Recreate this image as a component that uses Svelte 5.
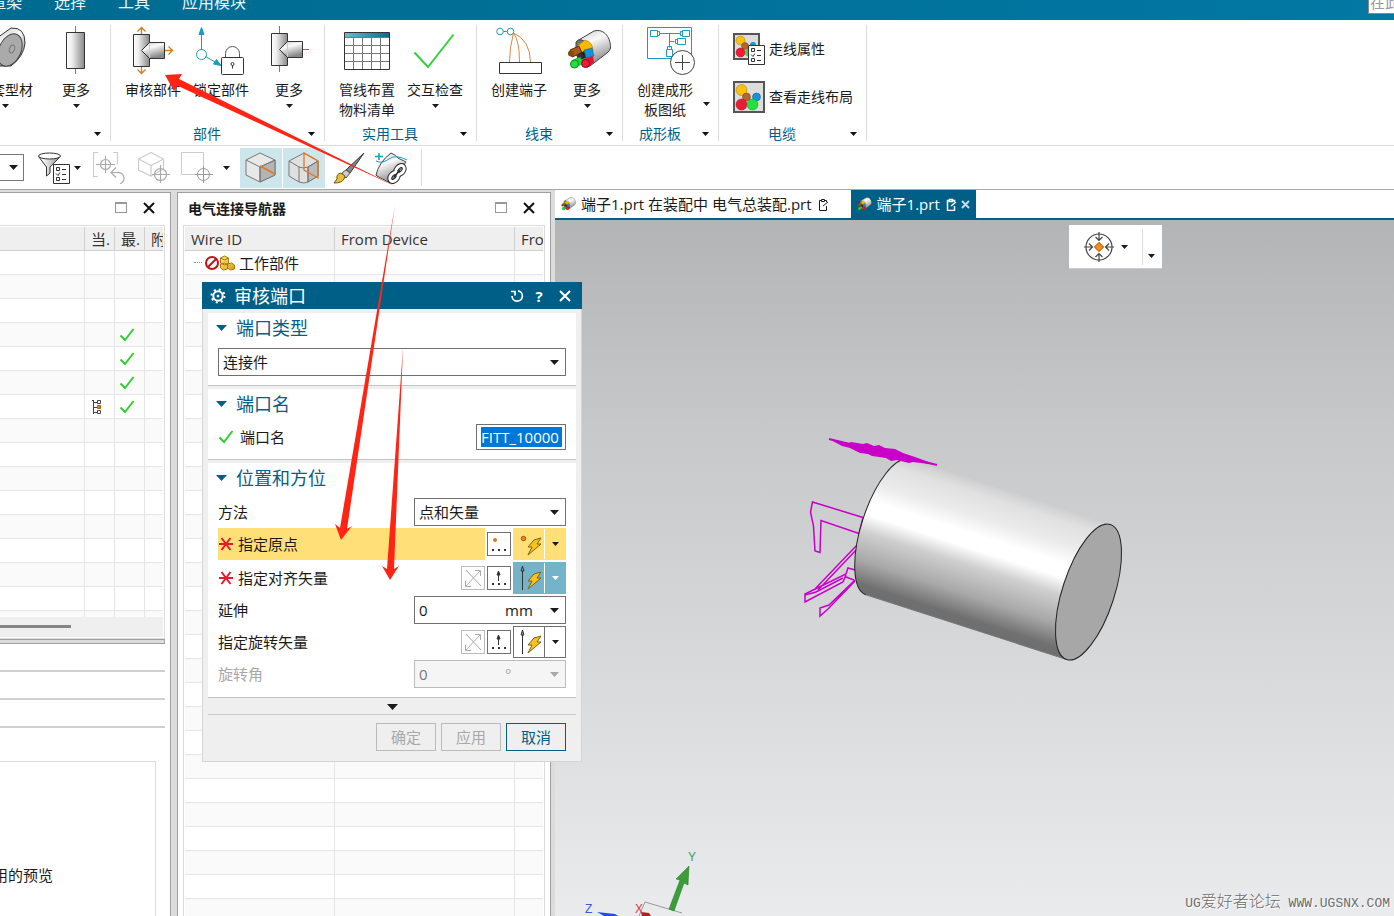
<script>
    let menus = ["渲染", "选择", "工具", "应用模块"];

    let leftRows = Array.from({ length: 16 }, (_, i) => ({
        checked: i >= 3 && i <= 6,
        tree: i === 6,
    }));
    let navRows = Array.from({ length: 40 }, (_, i) => (i === 0 ? "工作部件" : ""));

    let portType = $state("连接件");
    let portName = $state("FITT_10000");
    let method = $state("点和矢量");
    let extension = $state("0");
    let angle = $state("0");
</script>

{#snippet caret(size)}
    {#if size === "big"}
        <svg class="caret" width="11" height="6" viewBox="0 0 11 6"><path d="M0 0h11L5.5 6z" fill="currentColor" /></svg>
    {:else if size === "mid"}
        <svg class="caret" width="9" height="5" viewBox="0 0 9 5"><path d="M0 0h9L4.5 5z" fill="currentColor" /></svg>
    {:else}
        <svg class="caret" width="7" height="4" viewBox="0 0 7 4"><path d="M0 0h7L3.5 4z" fill="currentColor" /></svg>
    {/if}
{/snippet}

{#snippet tee()}
    <path d="M4.5 8.5h16v32h-16z" fill="url(#steel)" stroke="#333" />
    <path d="M20.5 16.5h15v16h-15l-8-8z" fill="url(#steelV)" stroke="#333" />
    <path d="M20.5 17v15" stroke="#ccc" />
{/snippet}

{#snippet cable()}
    <path d="M14 15L31 5C42 2 48 13 47.5 22Q47 25 44 27L27 40Q18 40 14 28z" fill="url(#steelV)" stroke="#444" />
    <path d="M13 16Q18 11 23 17Q31 27 27 40Q18 40 13 28z" fill="#777" stroke="#444" />
    <path d="M14 20l8-6q8 2 8 11l-9 4z" fill="#fbb902" stroke="#8a6a00" stroke-width="0.5" />
    <path d="M7 24l9-4 3 7-10 4z" fill="#a85a1a" stroke="#5e2f08" />
    <circle cx="8" cy="27.5" r="3" fill="#8a4512" />
    <path d="M15 28l6-3 3 6-7 3z" fill="#222" /><circle cx="17" cy="30.500" r="3" fill="#333" />
    <path d="M21 24l8-2 2 8-8 2z" fill="#1493d8" stroke="#075a8a" stroke-width="0.5" />
    <path d="M10 34l7-3 4 6-8 4z" fill="#1ed63b" stroke="#0c8a20" stroke-width="0.5" /><circle cx="11.5" cy="38" r="4" fill="#22e040" stroke="#0c8a20" />
    <path d="M21 33l9-3 1 6-7 6z" fill="#e8122c" /><circle cx="22.5" cy="37.500" r="4" fill="#f01a34" stroke="#8a0c1a" />
{/snippet}

{#snippet cross(color = "#111")}
    <svg width="12" height="12" viewBox="0 0 12 12"><path d="M1 1l10 10M11 1L1 11" stroke={color} stroke-width="2" /></svg>
{/snippet}

{#snippet check()}
    <svg width="16" height="16" viewBox="0 0 16 16"><path d="M1.5 8.5L6 13L14.5 2" fill="none" stroke="#3c3" stroke-width="2" /></svg>
{/snippet}

{#snippet star()}
    <svg width="16" height="16" viewBox="0 0 16 16"><path d="M1 8h14M3.5 2l9 12M12.5 2l-9 12" stroke="#e8192c" stroke-width="2" /></svg>
{/snippet}

{#snippet paper(x, y)}
    <g transform="translate({x} {y})">
        <path d="M.5.5h16v19H.5z" fill="#fff" stroke="#333" />
        <path d="M3.500 3.500h3v3h-3zM3.500 13.500h3v3h-3zM9 5.500h4M9 10.500h4M9 15.500h4" fill="none" stroke="#333" />
        <path d="M3 9.500l2 2 2-3" fill="none" stroke="#333" />
    </g>
{/snippet}

{#snippet toolIcon(name)}
    <svg class="tool-icon" width="48" height="48" viewBox="0 0 48 48" fill="none">
        {#if name === "roll"}
            <path d="M30 2Q44 1 44 17Q43 30 30 40H16V12z" fill="url(#steelV)" stroke="#333" />
            <ellipse cx="29" cy="24" rx="11" ry="17" transform="rotate(24 29 24)" fill="#aaa" stroke="#444" />
            <ellipse cx="31" cy="23" rx="2.5" ry="4" transform="rotate(20 31 23)" stroke="#777" />
        {:else if name === "pipe"}
            <path d="M23.5 0v6M23.5 43v5" stroke="#1a9cc0" />
            <path d="M14.5 6.500h18v36h-18z" fill="url(#steel)" stroke="#333" />
        {:else if name === "audit"}
            {@render tee()}
            <path d="M12.5 8V2M8.5 5.500l4-4 4 4M12.5 41v6M8.5 43.500l4 4 4-4M36 24.500h7M39.5 20.500l4 4-4 4" stroke="#e0791c" stroke-width="1.3" />
        {:else if name === "lock"}
            <path d="M4.5 24V6M8.5 30.500L19 36.500" stroke="#1a9cc0" />
            <path d="M4.5 1.500L7 8.500H2zM24 39.500l-7.500-1.500 3-4.500z" fill="#1a9cc0" stroke="#1a9cc0" />
            <circle cx="4.5" cy="28.5" r="5" stroke="#1a9cc0" />
            <path d="M28.5 31.500v-4a7 7 0 0 1 14 0v4" stroke="#555" />
            <rect x="24.5" y="31.5" width="22" height="17" rx="1" fill="#fff" stroke="#333" />
            <circle cx="35.5" cy="38" r="1.5" stroke="#333" /><path d="M35.5 39.500v3" stroke="#333" />
        {:else if name === "tee"}
            <g transform="translate(2 -1)">
                <path d="M12.5 8V1M12.5 41v6M36 24.500h6" stroke="#1a9cc0" />
                {@render tee()}
            </g>
        {:else if name === "table"}
            <path d="M1.5 6.500h45v37h-45z" fill="#fff" />
            <path d="M1.5 6.500h45v5h-45z" fill="url(#teal)" />
            <path d="M10.5 12v31M19.5 12v31M28.5 12v31M37.5 12v31M2 19.500h44M2 27.500h44M2 35.500h44M2 11.500h44" stroke="#777" />
            <path d="M1.5 6.500h45v37h-45z" stroke="#333" />
        {:else if name === "check"}
            <path d="M3.5 26.500L17 41L42.5 8.500" stroke="#33d23c" stroke-width="2" />
        {:else if name === "terminal"}
            <circle cx="5" cy="5.500" r="3.300" stroke="#1a9cc0" /><circle cx="15.5" cy="5.500" r="3.300" stroke="#1a9cc0" /><path d="M8.5 5.500h4" stroke="#1a9cc0" />
            <path d="M18.5 7Q14.5 22 14.5 36M18.5 7Q24.5 15 24.5 36M18.5 7Q35 14 35.5 36" stroke="#d98b3a" />
            <path d="M4.5 36.500h42v11h-42z" fill="#fff" stroke="#333" />
        {:else if name === "cable"}
            {@render cable()}
        {:else if name === "board"}
            <path d="M6.5 1.500h44v31h-44zM19 7.500h20M28.5 7.500v14M28.5 15.500h5" stroke="#1a9cc0" />
            <path d="M9.5 4.500h7v6h-7zM16.5 5.500h2v4h-2zM41.5 4.500h7v6h-7zM39.5 5.500h2v4h-2zM36.5 12.500h8v6h-8zM34.5 13.500h2v4h-2zM25.5 23.500h6v7h-6zM26.5 20.500h4v3h-4z" stroke="#1a9cc0" />
            <circle cx="41.5" cy="36.5" r="12" fill="#fff" stroke="#444" />
            <path d="M41.5 29v15M34 36.500h15" stroke="#444" />
        {/if}
    </svg>
{/snippet}

{#snippet tool(icon, lines, arrow)}
    <button class="tool">
        {@render toolIcon(icon)}
        <span class="tool-label">{#each lines as line}<span>{line}</span>{/each}</span>
        {#if arrow}{@render caret()}{/if}
    </button>
{/snippet}

{#snippet groupFoot(name)}
    <div class="group-foot">
        <span>{name}</span>
        <button aria-label="更多选项">{@render caret()}</button>
    </div>
{/snippet}

{#snippet bolt()}
    <path d="M23 10l7-2-4 6h4L17 25l4-8h-4z" transform="translate(-3 1)" fill="#fbc21a" stroke="#7d6218" />
{/snippet}

{#snippet pointButtons(kind, look)}
    {#if kind === "vector"}
        <button type="button" class="mini dim" aria-label="反向" disabled>
            <svg width="22" height="22" viewBox="0 0 22 22" fill="none" stroke="#aaa"><path d="M4 3l15 16M4 19L18 4M13 3.500h5.500V9M3.500 14v5.500H9" /></svg>
        </button>
    {/if}
    <button type="button" class="mini" aria-label="对话框">
        <svg width="22" height="22" viewBox="0 0 22 22">
            {#if kind === "point"}
                <circle cx="7" cy="7" r="2" fill="#e0791c" />
            {:else}
                <path d="M10.5 14V5M9 8l1.500-4L12 8z" fill="#333" stroke="#333" />
            {/if}
            <path d="M4 16h2v2H4zM10 16h2v2h-2zM16 16h2v2h-2z" fill="#333" />
        </svg>
    </button>
    <span class="split {look}">
        <button type="button" aria-label="自动判断">
            <svg width="30" height="30" viewBox="0 0 30 30" fill="none">
                {#if kind === "point"}
                    <circle cx="9.5" cy="9.500" r="2.300" fill="#e8861c" stroke="#a85a10" />
                {:else}
                    <path d="M8.5 27V8M7 8l1.500-5L10 8z" stroke="#333" fill="#999" />
                {/if}
                {@render bolt()}
            </svg>
        </button>
        <button type="button" class="drop" aria-label="选项">{@render caret()}</button>
    </span>
{/snippet}

<svg class="defs" width="0" height="0" aria-hidden="true">
    <defs>
        <linearGradient id="steel"><stop offset="0" stop-color="#fff" /><stop offset="0.3" stop-color="#eee" /><stop offset="1" stop-color="#888" /></linearGradient>
        <linearGradient id="steelV" x2="0.4" y2="1"><stop offset="0" stop-color="#c8c8c8" /><stop offset="0.4" stop-color="#fafafa" /><stop offset="1" stop-color="#888" /></linearGradient>
        <linearGradient id="teal"><stop offset="0" stop-color="#6cbdd4" /><stop offset="1" stop-color="#006d92" /></linearGradient>
        <linearGradient id="body" x2="0" y2="1">
            <stop offset="0" stop-color="#cfcfcf" /><stop offset="0.08" stop-color="#e0e0e0" /><stop offset="0.24" stop-color="#ececec" />
            <stop offset="0.36" stop-color="#fff" /><stop offset="0.46" stop-color="#fff" /><stop offset="0.58" stop-color="#cfcfcf" />
            <stop offset="0.78" stop-color="#a8a8a8" /><stop offset="0.94" stop-color="#707070" /><stop offset="1" stop-color="#6e6e6e" />
        </linearGradient>
        <linearGradient id="gold" x2="1" y2="1"><stop offset="0" stop-color="#ffe878" /><stop offset="1" stop-color="#d89f18" /></linearGradient>
    </defs>
</svg>

<div class="app">
    <header class="menubar">
        <nav>
            {#each menus as menu}
                <button>{menu}</button>
            {/each}
        </nav>
        <input class="search" type="text" placeholder="在此" aria-label="搜索" />
    </header>

    <section class="ribbon">
        <div class="group first">
            <div class="tools">
                {@render tool("roll", ["套型材"], true)}
                {@render tool("pipe", ["更多"], true)}
            </div>
            {@render groupFoot("")}
        </div>
        <div class="group">
            <div class="tools">
                {@render tool("audit", ["审核部件"], false)}
                {@render tool("lock", ["锁定部件"], false)}
                {@render tool("tee", ["更多"], true)}
            </div>
            {@render groupFoot("部件")}
        </div>
        <div class="group utils">
            <div class="tools">
                {@render tool("table", ["管线布置", "物料清单"], false)}
                {@render tool("check", ["交互检查"], true)}
            </div>
            {@render groupFoot("实用工具")}
        </div>
        <div class="group">
            <div class="tools">
                {@render tool("terminal", ["创建端子"], false)}
                {@render tool("cable", ["更多"], true)}
            </div>
            {@render groupFoot("线束")}
        </div>
        <div class="group board">
            <div class="tools">
                {@render tool("board", ["创建成形", "板图纸"], false)}
                <button class="side-caret" aria-label="展开">{@render caret()}</button>
            </div>
            {@render groupFoot("成形板")}
        </div>
        <div class="group wires">
            <div class="tools list">
                <button class="line-tool">
                    <svg width="32" height="32" viewBox="0 0 32 32">
                        <path d="M1 1h25v25H1z" fill="#ddd" stroke="#555" stroke-width="2" />
                        <circle cx="7.5" cy="7.500" r="4.500" fill="#fbc010" stroke="#a07800" stroke-width="0.5" /><circle cx="12" cy="13" r="3.500" fill="#b5672a" stroke="#7a4010" stroke-width="0.5" />
                        <circle cx="20" cy="12" r="3" fill="#1493d8" /><circle cx="7.5" cy="19.500" r="4.500" fill="#f01a34" stroke="#a00c1a" stroke-width="0.5" /><circle cx="16" cy="19.5" r="4" fill="#22e040" />
                        {@render paper(15, 12)}
                    </svg>
                    走线属性
                </button>
                <button class="line-tool">
                    <svg width="32" height="32" viewBox="0 0 32 32">
                        <path d="M1 1h30v30H1z" fill="#ddd" stroke="#555" stroke-width="2" />
                        <circle cx="8.5" cy="9" r="5.500" fill="#fbc010" stroke="#a07800" stroke-width="0.5" /><circle cx="13.5" cy="16" r="4" fill="#b5672a" stroke="#7a4010" stroke-width="0.5" />
                        <circle cx="23.5" cy="16" r="4" fill="#1493d8" stroke="#0a5c8c" stroke-width="0.5" /><circle cx="8.5" cy="23.500" r="5.500" fill="#f01a34" stroke="#a00c1a" stroke-width="0.5" /><circle cx="19.5" cy="23.500" r="5.500" fill="#22e040" stroke="#0c9a22" stroke-width="0.5" />
                    </svg>
                    查看走线布局
                </button>
            </div>
            {@render groupFoot("电缆")}
        </div>
    </section>

    <section class="toolbar">
        <button class="stub" aria-label="选择范围">{@render caret("mid")}</button>
        <button class="filter" aria-label="过滤器">
            <svg width="32" height="32" viewBox="0 0 32 32" fill="none" stroke="#333">
                <path d="M.5 4.500L8.500 15v9l3.500-3v-6L22.500 4.500" fill="url(#steel)" />
                <ellipse cx="11.5" cy="4" rx="11" ry="3" fill="#fff" />
                {@render paper(15, 12)}
            </svg>
            {@render caret()}
        </button>
        <button class="g1" aria-label="重置过滤器">
            <svg width="32" height="32" viewBox="0 0 32 32" fill="none" stroke="#aaa" stroke-width="1.2">
                <path d="M5 .5H.5v24H5M20 .5h4.500v12" stroke="#ccc" />
                <circle cx="12.5" cy="12.500" r="5" /><path d="M12.5 4v17M3 12.500h19M18 20.500h8q5 1 5 6 0 4-4 5M23 15.500l-5 5 5 5" />
            </svg>
        </button>
        <button class="g2" aria-label="选择体">
            <svg width="32" height="32" viewBox="0 0 32 32" fill="none" stroke="#ccc" stroke-width="1.2">
                <path d="M.5 7L13 .5 25.500 7v10L13 24 .5 18zM.5 7L13 13.500 25.500 7M13 13.500V24" />
                <g stroke="#aaa"><circle cx="22.5" cy="22.500" r="6" /><path d="M22.5 13v18M14 22.500h18" /></g>
            </svg>
        </button>
        <button class="g3" aria-label="矩形选择">
            <svg width="32" height="32" viewBox="0 0 32 32" fill="none">
                <path d="M22.5 15V.5H.5v22H15" stroke="#ccc" /><circle cx="22.5" cy="22.500" r="6" stroke="#999" /><path d="M22.5 14v17M14 22.500h18" stroke="#999" />
            </svg>
            {@render caret()}
        </button>
        <button class="on" aria-label="捕捉面">
            <svg width="32" height="32" viewBox="0 0 32 32" fill="none" stroke="#777">
                <path d="M1 8L15 1l15 7v15L15 30 1 23z" fill="#e8e8e8" /><path d="M15 15l15-7v15L15 30z" fill="#b4b4b4" /><path d="M1 8l14 7 15-7M15 15v15" />
                <path d="M15 14l15 8" stroke="#e07a20" stroke-width="1.5" />
            </svg>
        </button>
        <button class="on second" aria-label="捕捉边">
            <svg width="32" height="32" viewBox="0 0 32 32" fill="none" stroke="#777">
                <path d="M1 9L16 1l14 8v15l-10 6q-4 2-9 0L1 24z" fill="#e0e0e0" /><path d="M20 15l10-6v15l-10 6z" fill="#bbb" /><path d="M1 9l10 6q4 2 9 0l10-6M11 15v15M20 15v15" />
                <path d="M16 1v17l14 8V9z" stroke="#e07a20" stroke-width="1.3" />
            </svg>
        </button>
        <button class="brush" aria-label="格式刷">
            <svg width="32" height="32" viewBox="0 0 32 32">
                <path d="M31 1L17 21l-4-3z" fill="#888" stroke="#333" /><path d="M17 21l-4-3-3 2-1 3 4 3z" fill="#ccc" stroke="#555" />
                <path d="M8 21q-5 1-4 6l-3 4q8 0 10-4l1-3z" fill="#e8bf3a" stroke="#705410" />
            </svg>
        </button>
        <button class="chain" aria-label="曲面链接">
            <svg width="34" height="32" viewBox="0 0 34 32" fill="none">
                <path d="M1 23Q4 10 16 1q5 2 7 5l8 4-16 21L2 24z" fill="url(#steelV)" stroke="#444" />
                <path d="M4 1v7M0 4.500h8" stroke="#1a9cc0" stroke-width="1.5" /><path d="M1 9Q7 12 14 7t18 1" stroke="#1a9cc0" />
                <g stroke="#222" stroke-width="5"><ellipse cx="25" cy="18" rx="5" ry="3.500" transform="rotate(-50 25 18)" /><ellipse cx="19" cy="25" rx="5" ry="3.500" transform="rotate(-50 19 25)" /></g>
                <g stroke="#fff" stroke-width="3"><ellipse cx="25" cy="18" rx="5" ry="3.500" transform="rotate(-50 25 18)" /><ellipse cx="19" cy="25" rx="5" ry="3.500" transform="rotate(-50 19 25)" /></g>
                <path d="M19 25l6-7" stroke="#222" stroke-width="1.500" />
            </svg>
        </button>
    </section>

    <main class="work">
        <aside class="panel side">
            <div class="panel-head">
                <button aria-label="最大化"><span class="max"></span></button>
                <button aria-label="关闭">{@render cross()}</button>
            </div>
            <div class="frame side-frame">
                <div class="clip">
                    <table class="side-table">
                        <thead>
                            <tr><th></th><th>当.</th><th>最.</th><th>附</th></tr>
                        </thead>
                        <tbody>
                            {#each leftRows as row}
                                <tr>
                                    <td></td>
                                    <td>
                                        {#if row.tree}
                                            <svg width="10" height="16" viewBox="0 0 10 16" fill="none" stroke="#444"><path d="M1.5 1v14M0 1.500h2M2 3.500h3M2 8.500h3M2 13.500h3M5.500 1.500h3v3h-3zM5.500 11.500h3v3h-3z" /><path d="M5.5 6.500h3v3h-3z" fill="#e0791c" stroke="#c0600c" /></svg>
                                        {/if}
                                    </td>
                                    <td>{#if row.checked}{@render check()}{/if}</td>
                                    <td></td>
                                </tr>
                            {/each}
                        </tbody>
                    </table>
                </div>
                <div class="scroll"><div class="thumb"></div></div>
            </div>
            <div class="divider"></div>
            <div class="fold"></div>
            <div class="fold"></div>
            <div class="fold"></div>
            <div class="preview"><span>用的预览</span></div>
        </aside>

        <section class="panel nav">
            <div class="panel-head">
                <h2>电气连接导航器</h2>
                <button aria-label="最大化"><span class="max"></span></button>
                <button aria-label="关闭">{@render cross()}</button>
            </div>
            <div class="frame nav-frame">
                <table class="nav-table">
                    <thead>
                        <tr><th>Wire ID</th><th>From Device</th><th>Fro</th></tr>
                    </thead>
                    <tbody>
                        {#each navRows as name}
                            <tr>
                                <td>
                                    {#if name}
                                        <span class="node">
                                            <i></i>
                                            <svg width="31" height="16" viewBox="0 0 31 16">
                                                <circle cx="7" cy="8" r="6" fill="#fff" stroke="#c01418" stroke-width="2" /><path d="M3 12l8-8" stroke="#c01418" stroke-width="2" />
                                                <g fill="url(#gold)" stroke="#a87810"><path d="M15.500 3l4-2 4 2v5l-4 2-4-2zM15.500 9l4-1 3 2v4l-4 1-3-2zM22.500 9l4-1 3 2v4l-4 1-3-2z" /><path d="M15.500 3l4 2 4-2" fill="none" /></g>
                                            </svg>
                                            <span>{name}</span>
                                        </span>
                                    {/if}
                                </td>
                                <td></td>
                                <td></td>
                            </tr>
                        {/each}
                    </tbody>
                </table>
            </div>
        </section>

        <section class="stage">
            <div class="tabs">
                <button class="tab wide">
                    <svg width="16" height="16" viewBox="4 0 48 48">{@render cable()}</svg>
                    <span>端子1.prt 在装配中 电气总装配.prt</span>
                    <svg width="11" height="13" viewBox="0 0 11 13" fill="none" stroke="currentColor"><path d="M8.5 8v4.500h-7v-10h2M7 2.500h1.500V4M3.500 1.500h3v2h-3zM5 8l5-4" /></svg>
                </button>
                <button class="tab active">
                    <svg width="16" height="16" viewBox="4 0 48 48">{@render cable()}</svg>
                    <span>端子1.prt</span>
                    <svg width="11" height="13" viewBox="0 0 11 13" fill="none" stroke="currentColor" stroke-width="1.5"><path d="M8.5 8v4.500h-7v-10h2M7 2.500h1.500V4M3.500 1.500h3v2h-3zM5 8l5-4" /></svg>
                    <svg class="tab-close" width="9" height="9" viewBox="0 0 9 9"><path d="M1 1l7 7M8 1L1 8" stroke="#c4dce6" stroke-width="2" /></svg>
                </button>
            </div>
            <div class="canvas">
                <svg class="scene" width="838" height="696" viewBox="556 220 838 696" fill="none">
                    <g stroke="#c800c8" stroke-width="1.5">
                        <path d="M863 517.500L812.500 502l-2 10 3 14 1.500 25 5 1.500 1-32 38 13z" />
                        <path d="M858 544L814 590M859 547L818 590M862 572l-14-4-2 6-41 20v8l38-20 3-7M846 577l8 3M855 580L829 605l-9 3v8l8-7 27-28" />
                        <path d="M843 578l-27 14-11 3" />
                    </g>
                    <g transform="translate(1088.5 592) rotate(17.9)">
                        <path d="M0-71H-211A26 71 0 0 0-211 71H0z" fill="url(#body)" />
                        <path d="M-211-71A26 71 0 0 0-211 71" stroke="#222" />
                        <path d="M0 71H-211" stroke="#777" />
                        <ellipse rx="26" ry="71" fill="#a7a7a7" stroke="#222" />
                    </g>
                    <path d="M829 439l20 4 2-1 12 2 4-1 7 3 5-1 6 3 10 1 8 4 12 4 22 8-24-3-4 1-12-3-6 1-5-3-14-2-4-2-8-1-10-5-8-2z" fill="#c800c8" />
                    <path d="M829 439l108 26" stroke="#c800c8" stroke-width="2" />
                    <path d="M645 902l37 11M645 902l-6 14" stroke="#999" />
                    <path d="M669 909l11-29-4-1 13-13-1 19-4-2-10 28z" fill="#3a9e3a" stroke="#237523" stroke-width="0.5" />
                    <path d="M597 912l18 2 3 2h-14z" fill="#1f4de0" /><path d="M641 912l8 1 2 3h-9z" fill="#b02020" />
                    <text x="688" y="861" fill="#4a9a4a">Y</text>
                    <text x="585" y="913" fill="#3d55e0">Z</text>
                    <text x="635" y="913" fill="#d04040">X</text>
                </svg>
                <div class="float-bar">
                    <button aria-label="定向">
                        <svg width="32" height="32" viewBox="0 0 32 32" fill="none" stroke="#444" stroke-width="1.2">
                            <circle cx="16" cy="16" r="13" />
                            <path d="M16 1v8M12.5 6L16 9.500 19.500 6M16 31v-8M12.5 26l3.500-3.500 3.500 3.500M1 16h8M6 12.500L9.500 16 6 19.500M31 16h-8M26 12.500L22.500 16l3.500 3.500" />
                            <path d="M16 11.500l4.500 4.500-4.500 4.500-4.500-4.500z" fill="#f09020" stroke="#d07010" />
                        </svg>
                        {@render caret()}
                    </button>
                    <button class="float-more" aria-label="更多">{@render caret()}</button>
                </div>
                <p class="mark">UG<span>爱好者论坛</span> WWW.UGSNX.COM</p>
            </div>
        </section>
    </main>

    <form class="dialog" onsubmit={(e) => e.preventDefault()}>
        <div class="dialog-head">
            <svg width="16" height="16" viewBox="0 0 16 16" fill="none" stroke="#fff"><circle cx="8" cy="8" r="4.700" stroke-width="2" /><circle cx="8" cy="8" r="6.500" stroke-width="2" stroke-dasharray="2 3.105" /><circle cx="8" cy="8" r="1" fill="#fff" /></svg>
            <h2>审核端口</h2>
            <button type="button" aria-label="重置">
                <svg width="14" height="14" viewBox="0 0 14 14" fill="none" stroke="#fff" stroke-width="1.7"><path d="M8 1.800a5.200 5.200 0 1 1-6 5.200M1 2.500h4v4" /></svg>
            </button>
            <button type="button" class="help">?</button>
            <button type="button" aria-label="关闭">{@render cross("#fff")}</button>
        </div>

        <section class="block">
            <h3>{@render caret("big")}端口类型</h3>
            <div class="combo full">
                <select aria-label="端口类型" bind:value={portType}><option>连接件</option></select>
                {@render caret("mid")}
            </div>
        </section>

        <section class="block name-block">
            <h3>{@render caret("big")}端口名</h3>
            <div class="row">
                {@render check()}
                <label for="port-name" class="grow">端口名</label>
                <span class="name-box"><input id="port-name" bind:value={portName} /></span>
            </div>
        </section>

        <section class="block place">
            <h3>{@render caret("big")}位置和方位</h3>
            <div class="row">
                <label for="method" class="grow">方法</label>
                <div class="combo">
                    <select id="method" bind:value={method}><option>点和矢量</option></select>
                    {@render caret("mid")}
                </div>
            </div>
            <div class="row tall">
                <span class="grow required lit">{@render star()}指定原点</span>
                {@render pointButtons("point", "yellow")}
            </div>
            <div class="row tall">
                <span class="grow required">{@render star()}指定对齐矢量</span>
                {@render pointButtons("vector", "blue")}
            </div>
            <div class="row">
                <label for="extension" class="grow">延伸</label>
                <div class="combo">
                    <input id="extension" bind:value={extension} />
                    <span class="unit">mm</span>
                    {@render caret("mid")}
                </div>
            </div>
            <div class="row tall">
                <span class="grow">指定旋转矢量</span>
                {@render pointButtons("vector", "plain")}
            </div>
            <div class="row off">
                <label for="angle" class="grow">旋转角</label>
                <div class="combo">
                    <input id="angle" bind:value={angle} disabled />
                    <span class="unit">°</span>
                    {@render caret("mid")}
                </div>
            </div>
        </section>

        <button type="button" class="expand" aria-label="展开">{@render caret("big")}</button>
        <div class="actions">
            <button disabled>确定</button>
            <button type="button" disabled>应用</button>
            <button type="button" class="cancel">取消</button>
        </div>
    </form>

    <!-- pointer arrows from the audit tool to the two required fields -->
    <svg class="arrows" width="600" height="600" viewBox="0 0 600 600" fill="#ff2414">
        <path d="M165 75l17-1-3 5 220 109L178 86l-4 5z" />
        <path d="M395 205L347 529l5-3-11 14-6-16 5 4z" />
        <path d="M403 348l-9 221 5-3-9 14-8-14 5 3z" />
    </svg>
</div>

<style>
    :global(body) {
        margin: 0;
    }

    .app {
        position: relative;
        display: flex;
        flex-direction: column;
        height: 100vh;
        overflow: hidden;
        background: #fff;
        color: #1a1a1a;
        font: 15px/20px "Open Sans", "Noto Sans CJK SC", sans-serif;
    }

    .defs {
        position: absolute;
    }

    svg {
        display: block;
        flex: none;
    }

    button,
    input,
    select {
        margin: 0;
        padding: 0;
        border: 0;
        background: none;
        color: inherit;
        font: inherit;
    }

    h2,
    h3,
    p {
        margin: 0;
        font-weight: normal;
    }

    /* menu bar */
    .menubar {
        display: flex;
        justify-content: space-between;
        flex: none;
        height: 20px;
        overflow: hidden;
        background: linear-gradient(90deg, #006b90, #0278a4);
        color: #e8f4f8;
        font-size: 16px;
    }

    nav {
        display: flex;
        gap: 32px;
        height: 20px;
        margin: -8px 0 0 -10px;
    }

    .search {
        box-sizing: border-box;
        width: 26px;
        height: 24px;
        margin-top: -10px;
        padding-left: 1px;
        border: 1px solid #888;
        border-right: 0;
        background: #fff;
        font-size: 15px;
    }

    .search::placeholder {
        color: #999;
    }

    /* ribbon */
    .ribbon {
        display: flex;
        flex: none;
        height: 116px;
        padding: 5px 0 4px;
        border-bottom: 1px solid #dcdcdc;
        font-size: 14px;
    }

    .group {
        display: flex;
        flex-direction: column;
        justify-content: space-between;
        border-right: 1px solid #dcdcdc;
    }

    .tools {
        display: flex;
        align-items: flex-start;
        padding: 1px 1px 0 8px;
    }

    .group.first .tools {
        gap: 3px;
        margin-left: -29px;
        padding: 1px 0 0;
    }

    .utils .tools {
        padding-right: 7px;
    }

    .tool {
        display: flex;
        flex-direction: column;
        align-items: center;
        width: 68px;
    }

    .tool-icon {
        overflow: visible;
    }

    .tool-label {
        display: flex;
        flex-direction: column;
        align-items: center;
        margin: 6px 0 4px;
        white-space: nowrap;
    }

    .first .tool:first-child .tool-label {
        align-self: flex-end;
        margin-right: 6px;
    }

    .board .tools {
        padding-right: 0;
    }

    .side-caret {
        width: 19px;
        padding: 76px 0 0;
    }

    .side-caret .caret {
        margin-left: 4px;
    }

    .list {
        flex-direction: column;
        gap: 16px;
        padding: 8px 13px 0 14px;
    }

    .line-tool {
        display: flex;
        align-items: center;
        gap: 4px;
        height: 32px;
    }

    .group-foot {
        display: flex;
        align-items: center;
        height: 14px;
        color: #005f87;
    }

    .group-foot span {
        flex: 1;
        text-align: center;
    }

    .group-foot button {
        padding: 0 9px 0 5px;
        color: #111;
    }

    /* selection toolbar */
    .toolbar {
        display: flex;
        align-items: center;
        flex: none;
        height: 43px;
        border-bottom: 1px solid #a8a8a8;
    }

    .stub {
        display: grid;
        place-items: center end;
        box-sizing: border-box;
        width: 24px;
        height: 27px;
        padding-right: 5px;
        border: 1px solid #777;
        border-left: 0;
    }

    .filter,
    .g3 {
        display: flex;
        align-items: center;
        gap: 4px;
        margin: 0 12px 0 14px;
    }

    .g2 {
        margin-left: 13px;
    }

    .g3 {
        gap: 10px;
        margin: 0 10px 0 11px;
    }

    .on {
        display: grid;
        place-items: center;
        width: 42px;
        height: 40px;
        background: #cde6ec;
    }

    .second {
        margin-left: 1px;
    }

    .brush {
        margin: 0 10px 0 8px;
    }

    .chain {
        display: flex;
        align-items: center;
        height: 37px;
        padding-right: 12px;
        border-right: 1px solid #dcdcdc;
    }

    /* work area */
    .work {
        display: flex;
        flex: 1;
        min-height: 0;
        background: #dcdcdc;
    }

    .panel {
        display: flex;
        flex-direction: column;
        flex: none;
        box-sizing: border-box;
        margin-top: 2px;
        overflow: hidden;
        border: solid #a0a0a0;
        border-width: 1px 1px 0 0;
        background: #fff;
    }

    .side {
        width: 171px;
        margin-right: 6px;
    }

    .nav {
        width: 374px;
        margin-right: 4px;
        border-left-width: 1px;
    }

    .panel-head {
        display: flex;
        align-items: center;
        justify-content: flex-end;
        gap: 16px;
        flex: none;
        height: 32px;
        padding: 0 15px 0 10px;
    }

    .panel-head h2 {
        flex: 1;
        font-size: 14px;
        font-weight: bold;
    }

    .panel-head button {
        margin-bottom: 3px;
    }

    .max {
        display: block;
        box-sizing: border-box;
        width: 12px;
        height: 11px;
        border: 1px solid #999;
        border-top-width: 2px;
    }

    .frame {
        margin-right: 5px;
        padding: 1px 1px 0 0;
        border: 1px solid #dcdcdc;
        border-left: 0;
    }

    .side-frame {
        padding-bottom: 1px;
    }

    .nav-frame {
        flex: 1;
        min-height: 0;
        margin-left: 5px;
        padding-left: 1px;
        overflow: hidden;
        border-left: 1px solid #dcdcdc;
        border-bottom: 0;
    }

    .clip {
        height: 390px;
        overflow: hidden;
    }

    table {
        width: 100%;
        table-layout: fixed;
        border-spacing: 0;
    }

    th,
    td {
        box-sizing: border-box;
        height: 24px;
        padding: 0 0 0 6px;
        overflow: hidden;
        border: solid #e6e6e6;
        border-width: 0 1px 1px 0;
        text-align: left;
        white-space: nowrap;
    }

    th {
        border-color: #d0d0d0;
        background: #efefef;
        color: #333;
        font-weight: normal;
    }

    th:last-child,
    td:last-child {
        border-right: 0;
    }

    tbody tr:nth-child(even) {
        background: #fafafa;
    }

    .side-table th:nth-child(1) {
        width: 85px;
    }

    .side-table th:nth-child(2),
    .side-table th:nth-child(3) {
        width: 30px;
    }

    .side-table td {
        padding-left: 4px;
    }

    .side-table td:nth-child(2) {
        padding-left: 7px;
    }

    .nav-table th:nth-child(1) {
        width: 150px;
    }

    .nav-table th:nth-child(2) {
        width: 180px;
    }

    .node {
        display: flex;
        align-items: center;
        gap: 3px;
        padding-left: 3px;
    }

    .node i {
        width: 8px;
        border-top: 1px dotted #888;
    }

    .scroll {
        height: 20px;
        padding-top: 8px;
        box-sizing: border-box;
        background: #efefef;
    }

    .thumb {
        width: 71px;
        height: 3px;
        background: #858585;
    }

    .divider {
        flex: none;
        height: 3px;
        margin-right: 5px;
        border: 1px solid #a0a0a0;
        border-left: 0;
        background: #dcdcdc;
    }

    .fold {
        flex: none;
        height: 26px;
        margin-right: 5px;
        border-bottom: 2px solid #d0d0d0;
    }

    .preview {
        flex: 1;
        margin: 33px 14px 0 0;
        padding-top: 103px;
        border: solid #dcdcdc;
        border-width: 1px 1px 0 0;
    }

    .preview span {
        margin-left: -7px;
    }

    /* graphics window */
    .stage {
        display: flex;
        flex: 1;
        flex-direction: column;
        min-width: 0;
    }

    .tabs {
        display: flex;
        flex: none;
        height: 28px;
        border-bottom: 2px solid #005f87;
        background: #fff;
    }

    .tab {
        display: flex;
        align-items: center;
        gap: 4px;
        padding: 0 6px;
        white-space: nowrap;
    }

    .tab.wide {
        padding-right: 22px;
    }

    .tab span {
        margin-right: 2px;
    }

    .active {
        background: #005f87;
        color: #fff;
    }

    .canvas {
        position: relative;
        flex: 1;
        overflow: hidden;
        background: linear-gradient(#b3b4b6, #c6c8ca 30%, #d9dadc 66%, #e9ebed);
    }

    .scene {
        position: absolute;
        top: 0;
        left: 1px;
        font: 12px "Liberation Sans", sans-serif;
    }

    .float-bar {
        position: absolute;
        top: 5px;
        right: 232px;
        display: flex;
        align-items: center;
        width: 93px;
        height: 43px;
        border-bottom: 1px solid #ccc;
        background: #fff;
    }

    .float-bar button:first-child {
        display: flex;
        align-items: center;
        flex: 1;
        gap: 6px;
        padding-left: 14px;
    }

    .float-more {
        height: 36px;
        padding: 18px 7px 0 5px;
        border-left: 1px solid #dcdcdc;
    }

    .mark {
        position: absolute;
        right: 4px;
        bottom: 2px;
        color: #6c6c6c;
        font: 13px/20px "Liberation Mono", "Noto Sans CJK SC", monospace;
        text-shadow: 1px 1px #fff;
    }

    .mark span {
        font-size: 16px;
        font-weight: 300;
    }

    /* dialog */
    .dialog {
        position: absolute;
        top: 282px;
        left: 202px;
        box-sizing: border-box;
        width: 380px;
        padding: 0 5px 10px;
        border: 1px solid #d4d4d4;
        border-top: 0;
        background: #efefef;
    }

    .dialog-head {
        display: flex;
        align-items: center;
        gap: 8px;
        height: 27px;
        margin: 0 -6px 4px;
        padding: 0 11px 0 8px;
        background: #005f87;
        color: #fff;
    }

    .dialog-head h2 {
        flex: 1;
        font-size: 18px;
    }

    .dialog-head .help {
        width: 14px;
        margin-right: 5px;
        font-weight: bold;
    }

    .block {
        margin-bottom: 3px;
        padding: 0 10px 9px;
        border-bottom: 1px solid #c4c4c4;
        background: #fff;
    }

    .name-block {
        padding-bottom: 8px;
    }

    .place {
        display: flex;
        flex-direction: column;
        gap: 2px;
        margin-bottom: 0;
    }

    h3 {
        display: flex;
        align-items: center;
        gap: 9px;
        height: 30px;
        margin: 0 0 5px -2px;
        color: #005f87;
        font-size: 18px;
    }

    .place h3 {
        margin-bottom: 3px;
    }

    .name-block h3 {
        margin-bottom: 4px;
    }

    .row {
        display: flex;
        align-items: center;
        gap: 2px;
        height: 28px;
    }

    .tall {
        height: 32px;
    }

    .name-block .row {
        gap: 6px;
    }

    .grow {
        flex: 1;
    }

    .required {
        display: flex;
        align-items: center;
        gap: 4px;
        height: 32px;
    }

    .lit {
        background: #ffe078;
    }

    .combo {
        display: flex;
        align-items: center;
        box-sizing: border-box;
        width: 152px;
        height: 28px;
        padding: 0 6px 0 4px;
        border: 1px solid #707070;
        background: #fff;
    }

    .combo.full {
        width: auto;
    }

    .combo select,
    .combo input {
        flex: 1;
        min-width: 0;
        appearance: none;
        outline: 0;
    }

    .unit {
        width: 45px;
        flex: none;
    }

    .off {
        color: #a8a8a8;
    }

    .off .combo {
        border-color: #bbb;
        background: #f5f5f5;
    }

    .off input {
        color: #777;
    }

    .name-box {
        box-sizing: border-box;
        width: 90px;
        height: 26px;
        padding: 2px 3px 2px 4px;
        border: 1px solid #707070;
    }

    .name-box input {
        display: block;
        width: 81px;
        height: 20px;
        outline: 0;
        background: #0078d7;
        color: #fff;
    }

    .mini {
        width: 24px;
        height: 24px;
        border: 1px solid #707070;
        background: #fff;
    }

    .dim {
        border-color: #bbb;
    }

    .split {
        display: flex;
        box-sizing: border-box;
        width: 53px;
        height: 32px;
        border: 1px solid #707070;
    }

    .split .drop {
        display: grid;
        flex: 1;
        place-items: center;
        border-left: 1px solid #707070;
    }

    .yellow {
        border-color: #ffe078;
        background: #ffe078;
    }

    .blue {
        border-color: #74b3c8;
        background: #74b3c8;
    }

    .yellow .drop,
    .blue .drop {
        border-color: #fff;
    }

    .blue .drop {
        color: #fff;
    }

    .expand {
        display: grid;
        place-items: center;
        width: 100%;
        height: 17px;
        padding-top: 2px;
        border-bottom: 1px solid #ccc;
    }

    .actions {
        display: flex;
        justify-content: flex-end;
        gap: 5px;
        padding: 8px 10px 0;
    }

    .actions button {
        width: 60px;
        height: 28px;
        border: 1px solid #bbb;
        color: #a8a8a8;
    }

    .actions .cancel {
        border-color: #005f87;
        color: #005f87;
    }

    .arrows {
        position: absolute;
        top: 0;
        left: 0;
        pointer-events: none;
    }
</style>
